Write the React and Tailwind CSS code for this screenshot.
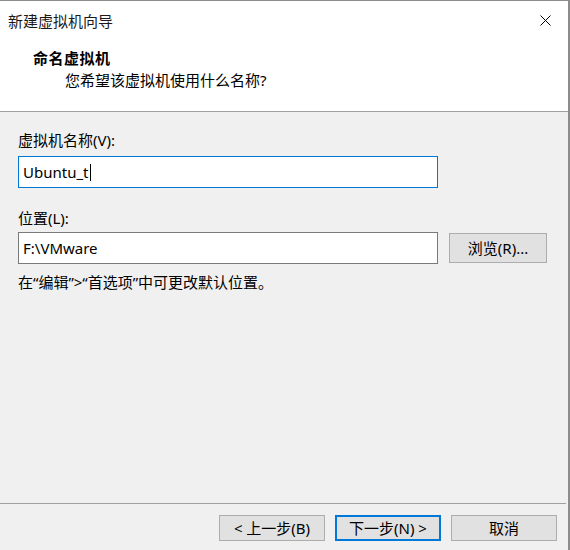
import React from 'react';

const font = { fontFamily: '"Noto Sans", "Noto Sans CJK SC", sans-serif' };

function WinButton({ children, primary }) {
  return (
    <button
      className={
        primary
          ? 'w-[106px] h-[26px] bg-[#e1e1e1] border-2 border-[#0078d7] text-[15px] leading-[20px] text-black flex items-center justify-center'
          : 'w-[106px] h-[26px] bg-[#e1e1e1] border border-[#adadad] text-[15px] leading-[20px] text-black flex items-center justify-center'
      }
    >
      {children}
    </button>
  );
}

export default function App() {
  return (
    <div
      className="w-[570px] h-[550px] flex flex-col bg-[#f0f0f0] border-t border-t-[#8c8c8c] border-r-2 border-r-[#8c8c8c] text-black"
      style={font}
    >
      {/* header */}
      <div className="h-[111px] bg-white border-b border-[#a0a0a0] flex flex-col">
        <div className="h-[39px] flex items-center justify-between pl-[8px] pr-[16px]">
          <span className="text-[15px] leading-[20px] text-[#1a1a1a]">新建虚拟机向导</span>
          <svg width="11" height="11" viewBox="0 0 11 11" className="mr-[1px]">
            <path d="M0.5 0.5 L10.5 10.5 M10.5 0.5 L0.5 10.5" stroke="#000" strokeWidth="1" fill="none" />
          </svg>
        </div>
        <div className="pt-[8px] pl-[33px]">
          <div className="text-[15px] leading-[20px] font-bold tracking-[0.5px]">命名虚拟机</div>
          <div className="mt-[2px] pl-[32px] text-[15px] leading-[20px]">您希望该虚拟机使用什么名称?</div>
        </div>
      </div>

      {/* body */}
      <div className="flex-1 flex flex-col pt-[18px] pl-[18px] pr-[21px]">
        <label className="text-[15px] leading-[20px]">虚拟机名称(V):</label>
        <div className="mt-[6px] w-[420px] h-[32px] bg-white border border-[#0078d7] flex items-center pl-[4px] text-[15px] leading-[20px]">
          <span>Ubuntu_t</span>
          <span className="w-px h-[17px] bg-black ml-[1px]" />
        </div>

        <label className="mt-[20px] text-[15px] leading-[20px]">位置(L):</label>
        <div className="mt-[4px] flex items-center gap-[11px]">
          <div className="w-[420px] h-[32px] bg-white border border-[#7a7a7a] flex items-center pl-[4px] text-[15px] leading-[20px]">
            F:\VMware
          </div>
          <button className="w-[98px] h-[30px] bg-[#e1e1e1] border border-[#adadad] text-[15px] leading-[20px] flex items-center justify-center">
            浏览(R)...
          </button>
        </div>

        <div className="mt-[8px] text-[15px] leading-[20px]">在“编辑”&gt;“首选项”中可更改默认位置。</div>
      </div>

      {/* footer */}
      <div className="border-t border-[#a0a0a0] mr-[2px] pt-[11px] pb-[9px] pr-[9px] flex justify-end gap-[10px]">
        <WinButton>&lt; 上一步(B)</WinButton>
        <WinButton primary>下一步(N) &gt;</WinButton>
        <WinButton>取消</WinButton>
      </div>
    </div>
  );
}
